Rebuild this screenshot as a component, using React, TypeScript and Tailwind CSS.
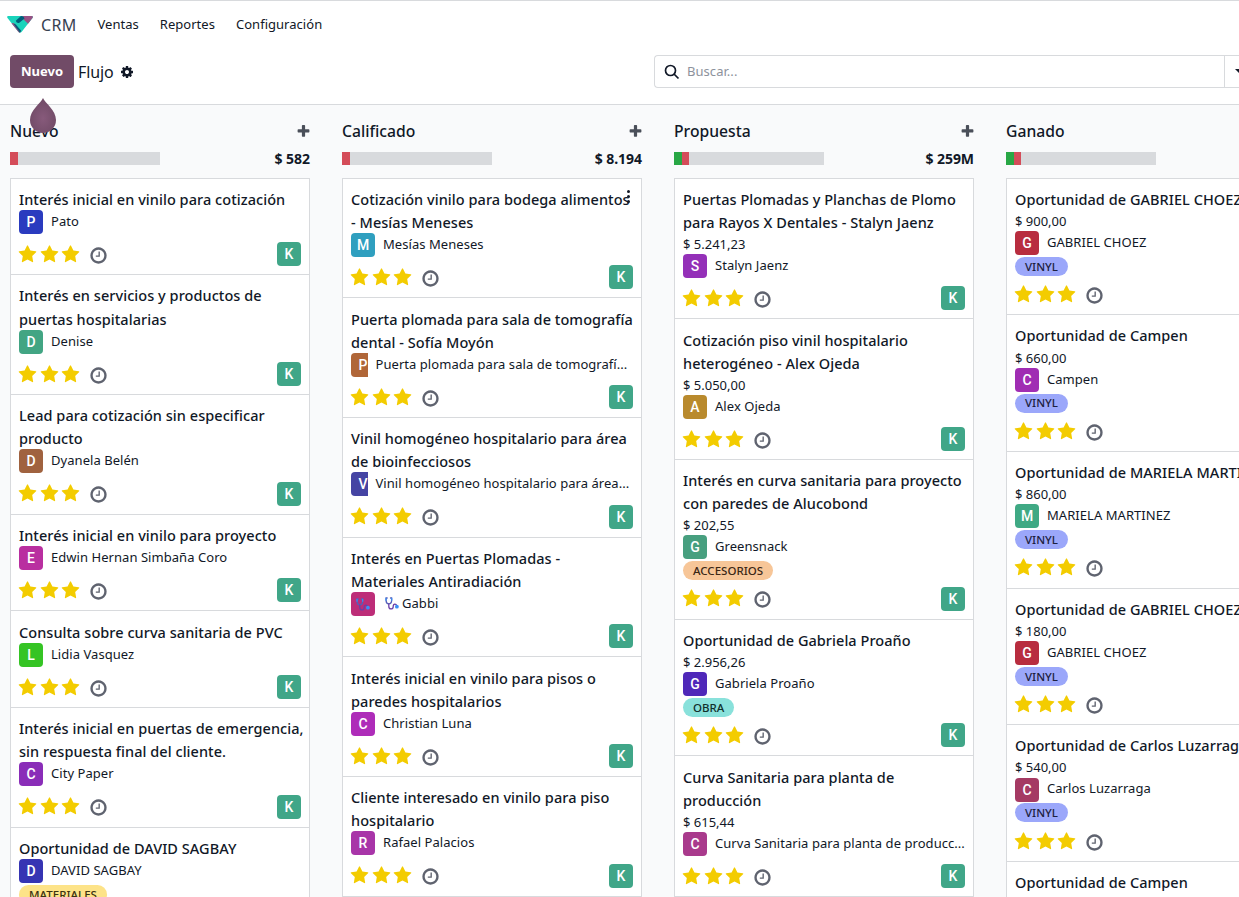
import type { ReactNode } from "react";

type Tag = { label: string; color: string };

type Lead = {
  title: string[];
  amount?: string;
  initial: string;
  color: string;
  name: string;
  clipped?: boolean;
  emoji?: boolean;
  menu?: boolean;
  tag?: Tag;
};

type Stage = {
  name: string;
  total?: string;
  green?: boolean;
  leads: Lead[];
};

const VINYL: Tag = { label: "VINYL", color: "bg-[#9ba7fa] text-[#1d2140]" };

const stages: Stage[] = [
  {
    name: "Nuevo",
    total: "$ 582",
    leads: [
      { title: ["Interés inicial en vinilo para cotización"], initial: "P", color: "bg-[#2a3bbf]", name: "Pato" },
      { title: ["Interés en servicios y productos de", "puertas hospitalarias"], initial: "D", color: "bg-[#42a583]", name: "Denise" },
      { title: ["Lead para cotización sin especificar", "producto"], initial: "D", color: "bg-[#a0623f]", name: "Dyanela Belén" },
      { title: ["Interés inicial en vinilo para proyecto"], initial: "E", color: "bg-[#b92fa0]", name: "Edwin Hernan Simbaña Coro" },
      { title: ["Consulta sobre curva sanitaria de PVC"], initial: "L", color: "bg-[#35c424]", name: "Lidia Vasquez" },
      { title: ["Interés inicial en puertas de emergencia,", "sin respuesta final del cliente."], initial: "C", color: "bg-[#8a2db8]", name: "City Paper" },
      {
        title: ["Oportunidad de DAVID SAGBAY"],
        initial: "D",
        color: "bg-[#3634b3]",
        name: "DAVID SAGBAY",
        tag: { label: "MATERIALES", color: "bg-[#fde388] text-[#3a3212]" },
      },
    ],
  },
  {
    name: "Calificado",
    total: "$ 8.194",
    leads: [
      { title: ["Cotización vinilo para bodega alimentos", "- Mesías Meneses"], initial: "M", color: "bg-[#2f9fbf]", name: "Mesías Meneses", menu: true },
      { title: ["Puerta plomada para sala de tomografía", "dental - Sofía Moyón"], initial: "P", color: "bg-[#b06638]", name: "Puerta plomada para sala de tomografí...", clipped: true },
      { title: ["Vinil homogéneo hospitalario para área", "de bioinfecciosos"], initial: "V", color: "bg-[#4544a3]", name: "Vinil homogéneo hospitalario para área...", clipped: true },
      { title: ["Interés en Puertas Plomadas -", "Materiales Antiradiación"], initial: "", color: "bg-[#bd2d78]", name: "Gabbi", emoji: true },
      { title: ["Interés inicial en vinilo para pisos o", "paredes hospitalarios"], initial: "C", color: "bg-[#ae2cb9]", name: "Christian Luna" },
      { title: ["Cliente interesado en vinilo para piso", "hospitalario"], initial: "R", color: "bg-[#a835a8]", name: "Rafael Palacios" },
    ],
  },
  {
    name: "Propuesta",
    total: "$ 259M",
    green: true,
    leads: [
      { title: ["Puertas Plomadas y Planchas de Plomo", "para Rayos X Dentales - Stalyn Jaenz"], amount: "$ 5.241,23", initial: "S", color: "bg-[#9430b8]", name: "Stalyn Jaenz" },
      { title: ["Cotización piso vinil hospitalario", "heterogéneo - Alex Ojeda"], amount: "$ 5.050,00", initial: "A", color: "bg-[#b98a2d]", name: "Alex Ojeda" },
      {
        title: ["Interés en curva sanitaria para proyecto", "con paredes de Alucobond"],
        amount: "$ 202,55",
        initial: "G",
        color: "bg-[#479f7f]",
        name: "Greensnack",
        tag: { label: "ACCESORIOS", color: "bg-[#f7c698] text-[#3b2715]" },
      },
      {
        title: ["Oportunidad de Gabriela Proaño"],
        amount: "$ 2.956,26",
        initial: "G",
        color: "bg-[#4f28b9]",
        name: "Gabriela Proaño",
        tag: { label: "OBRA", color: "bg-[#89e1db] text-[#112f2c]" },
      },
      { title: ["Curva Sanitaria para planta de", "producción"], amount: "$ 615,44", initial: "C", color: "bg-[#a93a8c]", name: "Curva Sanitaria para planta de producc..." },
    ],
  },
  {
    name: "Ganado",
    green: true,
    leads: [
      { title: ["Oportunidad de GABRIEL CHOEZ"], amount: "$ 900,00", initial: "G", color: "bg-[#b82d3f]", name: "GABRIEL CHOEZ", tag: VINYL },
      { title: ["Oportunidad de Campen"], amount: "$ 660,00", initial: "C", color: "bg-[#a02db3]", name: "Campen", tag: VINYL },
      { title: ["Oportunidad de MARIELA MARTINEZ"], amount: "$ 860,00", initial: "M", color: "bg-[#3fa984]", name: "MARIELA MARTINEZ", tag: VINYL },
      { title: ["Oportunidad de GABRIEL CHOEZ"], amount: "$ 180,00", initial: "G", color: "bg-[#b82d3f]", name: "GABRIEL CHOEZ", tag: VINYL },
      { title: ["Oportunidad de Carlos Luzarraga"], amount: "$ 540,00", initial: "C", color: "bg-[#a53a63]", name: "Carlos Luzarraga", tag: VINYL },
      { title: ["Oportunidad de Campen"], amount: "$ 660,00", initial: "C", color: "bg-[#a02db3]", name: "Campen", tag: VINYL },
    ],
  },
];

const STAR =
  "M1728 647q0 22-26 48l-363 354 86 500q1 7 1 20 0 21-10.5 35.5t-30.5 14.5q-19 0-40-12l-449-236-449 236q-22 12-40 12-21 0-31.5-14.5t-10.5-35.5q0-6 2-20l86-500-364-354q-25-27-25-48 0-37 56-46l502-73 225-455q19-41 49-41t49 41l225 455 502 73q56 9 56 46z";
const CLOCK =
  "M1024 544v448q0 14-9 23t-23 9h-320q-14 0-23-9t-9-23v-64q0-14 9-23t23-9h224v-352q0-14 9-23t23-9h64q14 0 23 9t9 23zm416 352q0-148-73-273t-198-198-273-73-273 73-198 198-73 273 73 273 198 198 273 73 273-73 198-198 73-273zm224 0q0 209-103 385.5t-279.5 279.5-385.5 103-385.5-103-279.5-279.5-103-385.5 103-385.5 279.5-279.5 385.5-103 385.5 103 279.5 279.5 103 385.5z";
const PLUS =
  "M1600 736v192q0 40-28 68t-68 28h-416v416q0 40-28 68t-68 28h-192q-40 0-68-28t-28-68v-416h-416q-40 0-68-28t-28-68v-192q0-40 28-68t68-28h416v-416q0-40 28-68t68-28h192q40 0 68 28t28 68v416h416q40 0 68 28t28 68z";
const COG =
  "M1152 896q0-106-75-181t-181-75-181 75-75 181 75 181 181 75 181-75 75-181zm512-109v222q0 12-8 23t-20 13l-185 28q-19 54-39 91 35 50 107 138 10 12 10 25t-9 23q-27 37-99 108t-94 71q-12 0-26-9l-138-108q-44 23-91 38-16 136-29 186-7 28-36 28h-222q-14 0-24.5-8.5t-11.5-21.5l-28-184q-49-16-90-37l-141 107q-10 9-25 9-14 0-25-11-126-114-165-168-7-10-7-23 0-12 8-23 15-21 51-66.5t54-70.5q-27-50-41-99l-183-27q-13-2-21-12.5t-8-23.5v-222q0-12 8-23t19-13l186-28q14-46 39-92-40-57-107-138-10-12-10-24 0-10 9-23 26-36 98.5-107.5t94.5-71.5q13 0 26 10l138 107q44-23 91-38 16-136 29-186 7-28 36-28h222q14 0 24.5 8.5t11.5 21.5l28 184q49 16 90 37l142-107q9-9 24-9 13 0 25 10 129 119 165 170 7 8 7 22 0 12-8 23-15 21-51 66.5t-54 70.5q26 50 41 98l183 28q13 2 21 12.5t8 23.5z";

function Glyph({ d, className }: { d: string; className: string }) {
  return (
    <svg viewBox="0 0 1792 1792" fill="currentColor" className={`shrink-0 ${className}`}>
      <path d={d} />
    </svg>
  );
}

function Stethoscope({ className }: { className: string }) {
  return (
    <svg viewBox="0 0 14 13" fill="none" strokeWidth="1.3" strokeLinecap="round" className={`shrink-0 ${className}`}>
      <path d="M2.2 1H1.1v2.5c0 2.2 1.1 3.3 2.7 3.3s2.8-1.1 2.8-3.3V1H5.5" stroke="#5560b8" />
      <path d="M3.8 7v2.2c0 1.7.9 2.7 2.2 2.7s2.2-1 2.2-2.5c0-1.4.6-2.3 1.7-2.3s1.6.6 1.7 1.6" stroke="#6a3fa8" />
      <circle cx="11.9" cy="9.7" r="1.9" fill="#3b8ef5" />
      <path d="M1 1.5v1.7M6.7 1.5v1.7" stroke="#3b8ef5" />
    </svg>
  );
}

function Avatar({ color, clipped, children }: { color: string; clipped?: boolean; children: ReactNode }) {
  return (
    <span className={`h-6 shrink-0 overflow-hidden ${clipped ? "w-[16.5px] rounded-l" : "w-6 rounded"} ${color}`}>
      <span className="flex h-6 w-6 items-center justify-center pt-px font-[Roboto] text-[14px] font-medium text-white">
        {children}
      </span>
    </span>
  );
}

function LeadCard({ lead }: { lead: Lead }) {
  return (
    <article className="relative border border-b-0 border-[#d8dadd] bg-white px-2 pt-[9.125px] pb-[8.1875px]">
      <h3 className="text-[14.5px] leading-[23.03125px] font-medium tracking-[0.05px] whitespace-nowrap">
        {lead.title.map((line) => (
          <span key={line} className="block h-[23.03125px]">
            {line}
          </span>
        ))}
      </h3>
      {lead.menu && (
        <span className="absolute top-[11px] right-[11px] flex flex-col gap-[2px]">
          <i className="size-[3px] rounded-full bg-[#111827]" />
          <i className="size-[3px] rounded-full bg-[#111827]" />
          <i className="size-[3px] rounded-full bg-[#111827]" />
        </span>
      )}
      {lead.amount && <div className="h-[21px] text-[13px] leading-[21px]">{lead.amount}</div>}
      <div className="flex h-[21px] whitespace-nowrap">
        <div className="-mt-[0.9px] flex">
          <Avatar color={lead.color} clipped={lead.clipped}>
            {lead.emoji ? <Stethoscope className="h-[13px] w-[14px]" /> : lead.initial}
          </Avatar>
        </div>
        <span className="ml-2 flex items-center text-[13px] leading-[21px] tracking-[0.05px]">
          {lead.emoji && <Stethoscope className="mr-[3px] ml-[2px] h-[13px] w-[14px]" />}
          {lead.name}
        </span>
      </div>
      {lead.tag && (
        <div className="flex h-[19px] pt-1">
          <span className={`flex h-[19px] items-center rounded-full px-[10px] text-[11.5px] leading-none font-medium ${lead.tag.color}`}>
            {lead.tag.label}
          </span>
        </div>
      )}
      <footer className="mt-[10.3125px] flex h-6 items-center">
        <div className="flex gap-[2.4px] pt-[0.5px] text-[#f3cc00]">
          <Glyph d={STAR} className="-ml-[0.6px] size-[19px]" />
          <Glyph d={STAR} className="size-[19px]" />
          <Glyph d={STAR} className="size-[19px]" />
        </div>
        <Glyph d={CLOCK} className="mt-[2.6px] ml-[9.2px] size-[19px] text-[#5f636f]" />
        <div className="ml-auto flex">
          <Avatar color="bg-[#40a688]">K</Avatar>
        </div>
      </footer>
    </article>
  );
}

function StageColumn({ stage }: { stage: Stage }) {
  return (
    <section className="w-[300px] shrink-0">
      <div className="flex h-[52px] items-center justify-between">
        <h2 className="pt-px text-[15.7px] font-medium">{stage.name}</h2>
        <Glyph d={PLUS} className="-mr-px size-[15px] text-[#4a4f59]" />
      </div>
      <div className="-mt-[5px] flex h-[13px] items-center justify-between">
        <div className="flex h-[13px] w-[150px] bg-[#d8dadd]">
          {stage.green && <div className="w-2 bg-[#28a745]" />}
          <div className={stage.green ? "w-[7px] bg-[#d44c59]" : "w-2 bg-[#d44c59]"} />
        </div>
        <span className="text-[14px] font-bold tracking-[-0.05px]">{stage.total}</span>
      </div>
      <div className="mt-[12.703125px] border-b border-[#d8dadd]">
        {stage.leads.map((lead, i) => (
          <LeadCard key={i} lead={lead} />
        ))}
      </div>
    </section>
  );
}

function Logo() {
  return (
    <svg viewBox="0 0 26 17" className="h-[17px] w-[26px]">
      <path d="M1.2 0H24.8Q26.5.3 25.5 2L14.5 16Q13 17.5 11.5 16L.5 2Q-.5.3 1.2 0Z" fill="#1ad3bb" />
      <path d="M15.5 0H24.8Q26.5.3 25.5 2L21 7.8 15.500 2.5Z" fill="#985184" />
      <path d="M4.5 7.2Q6.500 6.500 8 8L13.500 14.500Q13.700 16.500 12.500 16.800L11.500 16Z" fill="#985184" />
      <path d="M14 0Q17 0 17.500 2.500L12 7Q9.500 7.500 8.800 4.800ZM6.500 7.800Q7.800 7.500 9 8.800L14 14.500Q14 16 12.800 16.500Z" fill="#005e7a" />
    </svg>
  );
}

export default function App() {
  return (
    <div className="flex h-[897px] w-[1239px] flex-col overflow-hidden bg-[#f9fafb] font-['Noto_Sans',sans-serif] text-[#111827]">
      <header className="h-[105px] shrink-0 border-t border-b border-[#d8dadd] bg-white">
        <nav className="flex h-[46px] items-center pt-px pl-[7px] text-[13px] tracking-[0.03px]">
          <Logo />
          <span className="ml-2 text-base tracking-[0.3px] text-[#374151]">CRM</span>
          <span className="ml-[21px]">Ventas</span>
          <span className="ml-[21px]">Reportes</span>
          <span className="ml-[21px]">Configuración</span>
        </nav>
        <div className="flex h-12 items-center pl-[10px]">
          <div className="relative">
            <button className="h-[33px] w-16 rounded bg-[#714b67] pt-px text-[13px] font-bold text-white">Nuevo</button>
            <svg viewBox="0 0 28 36" className="absolute top-[43px] left-[19px] z-10 h-9 w-7">
              <defs>
                <radialGradient id="drop" cx="50%" cy="58%" r="55%">
                  <stop offset="0" stopColor="#875a7b" />
                  <stop offset="1" stopColor="#714b67" />
                </radialGradient>
              </defs>
              <path d="M14 0C16 5 27 12 27 22A13 13 0 0 1 1 22C1 12 12 5 14 0Z" fill="url(#drop)" />
            </svg>
          </div>
          <span className="ml-1 pt-px text-base tracking-[-0.1px]">Flujo</span>
          <Glyph d={COG} className="mt-px ml-[6.5px] size-[14px]" />
          <div className="ml-auto flex h-[33px] w-[585px] rounded-l border border-r-0 border-[#d8dadd]">
            <div className="flex flex-1 items-center pt-px pl-[9px]">
              <svg viewBox="0 0 16 16" fill="none" stroke="currentColor" strokeWidth="1.7" className="size-4">
                <circle cx="6.5" cy="6.5" r="5" />
                <path d="M10 10l4.5 4.5" />
              </svg>
              <span className="ml-[7px] pt-px text-[13px] tracking-[0.05px] text-[#8d929c]">Buscar...</span>
            </div>
            <div className="flex w-[15px] items-center overflow-hidden border-l border-[#d8dadd] pl-[10px]">
              <svg viewBox="0 0 10 5" className="h-[5px] w-[10px] shrink-0">
                <path d="M0 0H10L5 5Z" fill="#111827" />
              </svg>
            </div>
          </div>
        </div>
      </header>
      <main className="flex flex-1 items-start gap-8 overflow-hidden pl-[10px]">
        {stages.map((stage) => (
          <StageColumn key={stage.name} stage={stage} />
        ))}
      </main>
    </div>
  );
}
